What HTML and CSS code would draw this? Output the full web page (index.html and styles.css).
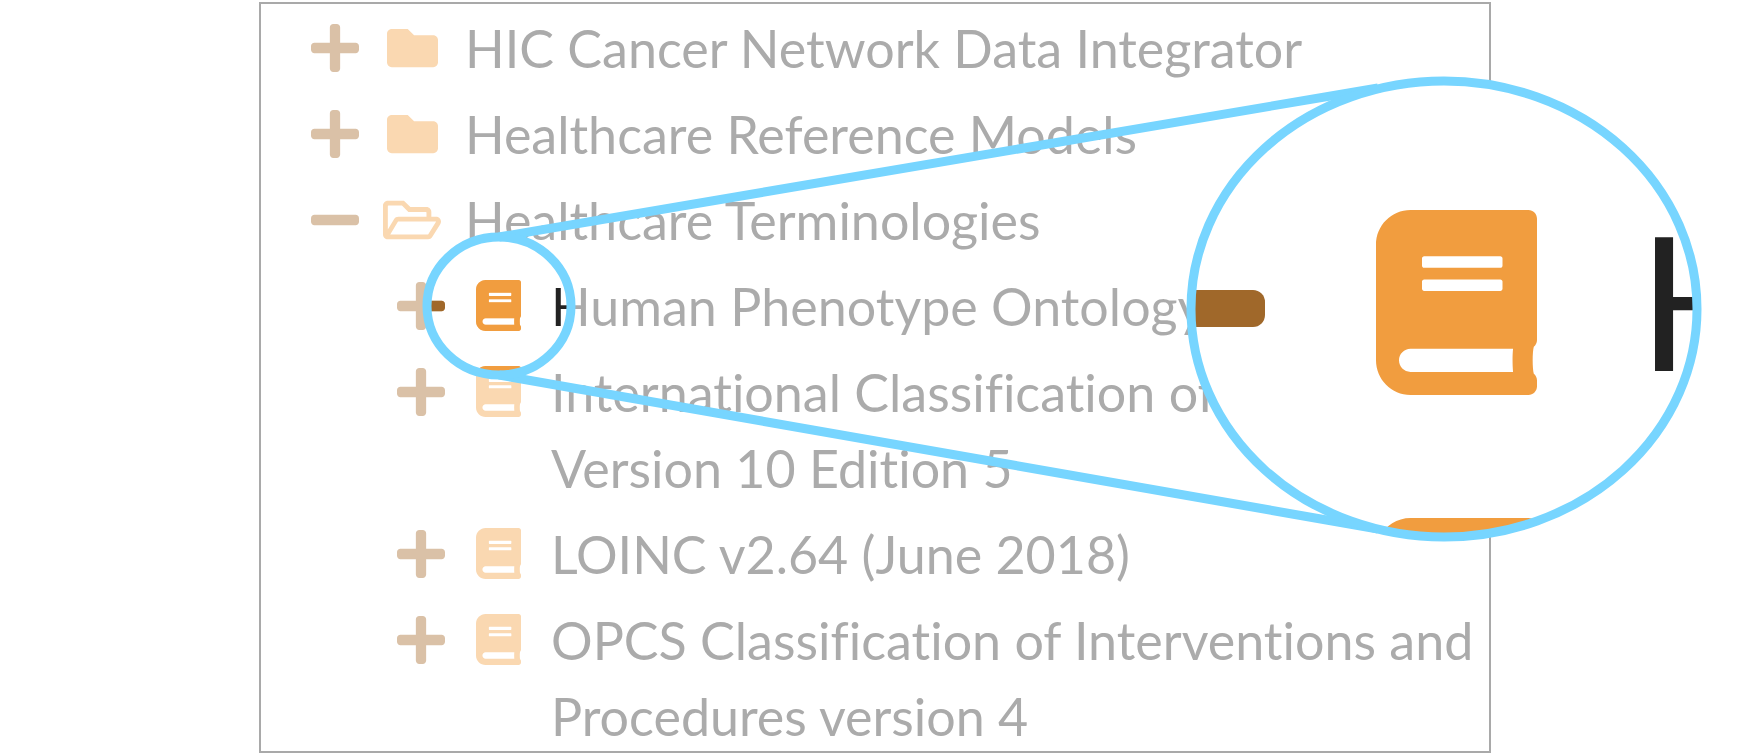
FILE: index.html
```html
<!DOCTYPE html>
<html lang="en">
<head>
<meta charset="utf-8">
<title>Healthcare Terminologies</title>
<link rel="stylesheet" href="styles.css">
</head>
<body>
<svg class="symbols" aria-hidden="true">
  <symbol id="plus" viewBox="0 32 448 448"><path d="M416 208H272V64c0-17.67-14.33-32-32-32h-32c-17.67 0-32 14.33-32 32v144H32c-17.67 0-32 14.33-32 32v32c0 17.67 14.33 32 32 32h144v144c0 17.67 14.33 32 32 32h32c17.67 0 32-14.33 32-32V304h144c17.67 0 32-14.33 32-32v-32c0-17.67-14.33-32-32-32z"/></symbol>
  <symbol id="minus" viewBox="0 32 448 448"><path d="M416 208H32c-17.67 0-32 14.33-32 32v32c0 17.67 14.33 32 32 32h384c17.67 0 32-14.33 32-32v-32c0-17.67-14.33-32-32-32z"/></symbol>
  <symbol id="folder" viewBox="0 0 512 512"><path d="M464 128H272l-64-64H48C21.5 64 0 85.5 0 112v288c0 26.5 21.5 48 48 48h416c26.5 0 48-21.5 48-48V176c0-26.5-21.5-48-48-48z"/></symbol>
  <symbol id="folder-open" viewBox="0 0 576 512"><path d="M527.9 224H480v-48c0-26.5-21.5-48-48-48H272l-64-64H48C21.5 64 0 85.5 0 112v288c0 26.5 21.5 48 48 48h400c16.5 0 31.9-8.5 40.7-22.6l79.9-128c20-31.9-3-73.4-40.7-73.4zM48 118c0-3.3 2.7-6 6-6h134.1l64 64H426c3.3 0 6 2.7 6 6v42H152c-16.8 0-32.4 8.8-41.1 23.2L48 351.4zm400 282H72l77.2-128H528z"/></symbol>
  <symbol id="book" viewBox="0 0 448 512" preserveAspectRatio="none"><path d="M448 360V24c0-13.3-10.7-24-24-24H96C43 0 0 43 0 96v320c0 53 43 96 96 96h328c13.3 0 24-10.7 24-24v-16c0-7.5-3.5-14.3-8.9-18.7-4.2-15.4-4.2-59.3 0-74.7 5.4-4.3 8.9-11.1 8.9-18.6zM128 134c0-3.3 2.7-6 6-6h212c3.3 0 6 2.7 6 6v20c0 3.3-2.7 6-6 6H134c-3.3 0-6-2.7-6-6v-20zm0 64c0-3.3 2.7-6 6-6h212c3.3 0 6 2.7 6 6v20c0 3.3-2.7 6-6 6H134c-3.3 0-6-2.7-6-6v-20zm253.4 250H96c-17.7 0-32-14.3-32-32 0-17.6 14.4-32 32-32h285.4c-1.9 17.1-1.9 46.9 0 64z"/></symbol>
</svg>
<main class="page">
  <section class="panel">
    <ul class="tree">
      <li class="node">
        <div class="row">
          <button class="toggle" type="button" aria-expanded="false" aria-labelledby="n1"><svg class="sign"><use href="#plus"/></svg></button>
          <svg class="icon"><use href="#folder"/></svg>
          <span class="label" id="n1">HIC Cancer Network Data Integrator</span>
        </div>
      </li>
      <li class="node">
        <div class="row">
          <button class="toggle" type="button" aria-expanded="false" aria-labelledby="n2"><svg class="sign"><use href="#plus"/></svg></button>
          <svg class="icon"><use href="#folder"/></svg>
          <span class="label" id="n2">Healthcare Reference Models</span>
        </div>
      </li>
      <li class="node">
        <div class="row">
          <button class="toggle" type="button" aria-expanded="true" aria-labelledby="n3"><svg class="sign"><use href="#minus"/></svg></button>
          <svg class="icon icon-open"><use href="#folder-open"/></svg>
          <span class="label" id="n3">Healthcare Terminologies</span>
        </div>
        <ul class="tree branch">
          <li class="node">
            <div class="row">
              <button class="toggle" type="button" aria-expanded="false" aria-labelledby="n4"><svg class="sign"><use href="#plus"/></svg></button>
              <svg class="icon icon-book"><use href="#book"/></svg>
              <span class="label label-lit" id="n4">Human Phenotype Ontology</span>
            </div>
          </li>
          <li class="node">
            <div class="row">
              <button class="toggle" type="button" aria-expanded="false" aria-labelledby="n5"><svg class="sign"><use href="#plus"/></svg></button>
              <svg class="icon icon-book"><use href="#book"/></svg>
              <span class="label" id="n5">International Classification of<br>Version 10 Edition 5</span>
            </div>
          </li>
          <li class="node">
            <div class="row">
              <button class="toggle" type="button" aria-expanded="false" aria-labelledby="n6"><svg class="sign"><use href="#plus"/></svg></button>
              <svg class="icon icon-book"><use href="#book"/></svg>
              <span class="label" id="n6">LOINC v2.64 (June 2018)</span>
            </div>
          </li>
          <li class="node">
            <div class="row">
              <button class="toggle" type="button" aria-expanded="false" aria-labelledby="n7"><svg class="sign"><use href="#plus"/></svg></button>
              <svg class="icon icon-book"><use href="#book"/></svg>
              <span class="label" id="n7">OPCS Classification of Interventions and<br>Procedures version 4</span>
            </div>
          </li>
        </ul>
      </li>
    </ul>
  </section>
  <svg class="callout" viewBox="0 0 1747 754" aria-hidden="true">
    <clipPath id="spot"><ellipse cx="499" cy="306" rx="72" ry="69"/></clipPath>
    <clipPath id="lens"><ellipse cx="1444" cy="309" rx="253" ry="228"/></clipPath>
    <g clip-path="url(#spot)">
      <use class="sign-strong" href="#plus" x="397" y="282" width="48" height="48"/>
      <use class="book-strong" href="#book" x="476" y="280" width="45" height="51"/>
      <use class="book-strong" href="#book" x="476" y="366" width="45" height="51"/>
    </g>
    <path class="outline" d="M499 237L1378 88M499 375L1378 529"/>
    <g clip-path="url(#lens)">
      <rect class="paper" x="1186" y="77" width="520" height="465"/>
      <rect class="sign-strong" x="1100" y="290" width="165" height="37" rx="12"/>
      <use class="book-strong" href="#book" x="1376" y="210" width="161" height="185"/>
      <use class="book-strong" href="#book" x="1376" y="518" width="161" height="185"/>
      <text class="letter" x="1638" y="371">H</text>
    </g>
    <ellipse class="outline" cx="499" cy="306" rx="72" ry="69"/>
    <ellipse class="outline" cx="1444" cy="309" rx="253" ry="228"/>
  </svg>
</main>
</body>
</html>
```
FILE: styles.css
```css
body {
  margin: 0;
  background: #fff;
  font-family: Lato, "Open Sans", sans-serif;
}

.symbols {
  position: absolute;
  width: 0;
  height: 0;
}

.page {
  position: relative;
  padding: 2px 256px 0 259px;
}

.panel {
  border: 2px solid #a9a9a9;
  padding: 6px 0 0 50px;
}

.tree {
  display: grid;
  gap: 10px;
  margin: 0 0 -3px;
  padding: 0;
  list-style: none;
}

.branch {
  margin: 10px 0 0;
  padding-left: 86px;
}

.row {
  display: grid;
  grid-template-columns: 48px 58px 1fr;
  column-gap: 24px;
}

.toggle {
  display: flex;
  align-items: center;
  height: 76px;
  padding: 0;
  border: 0;
  background: none;
  cursor: pointer;
}

.sign {
  width: 48px;
  height: 48px;
  fill: #dac1a7;
}

.icon {
  align-self: start;
  justify-self: center;
  width: 51px;
  height: 76px;
  fill: #fad8b1;
}

.icon-open {
  width: 58px;
}

.icon-book {
  width: 45px;
  height: 51px;
  margin-top: 12px;
}

.label {
  color: #ababab;
  font-size: 52px;
  line-height: 76px;
  font-variant-ligatures: none;
  white-space: nowrap;
}

.label-lit {
  background: linear-gradient(90deg, #222 22px, #ababab 22px);
  background-clip: text;
  color: transparent;
}

.callout {
  position: absolute;
  top: 0;
  left: 0;
  width: 1747px;
  height: 754px;
  pointer-events: none;
}

.paper {
  fill: #fff;
}

.outline {
  fill: none;
  stroke: #77d5ff;
  stroke-width: 9px;
}

.sign-strong {
  fill: #a0682a;
}

.book-strong {
  fill: #f19d3f;
}

.letter {
  fill: #222;
  font-size: 186px;
}
```
